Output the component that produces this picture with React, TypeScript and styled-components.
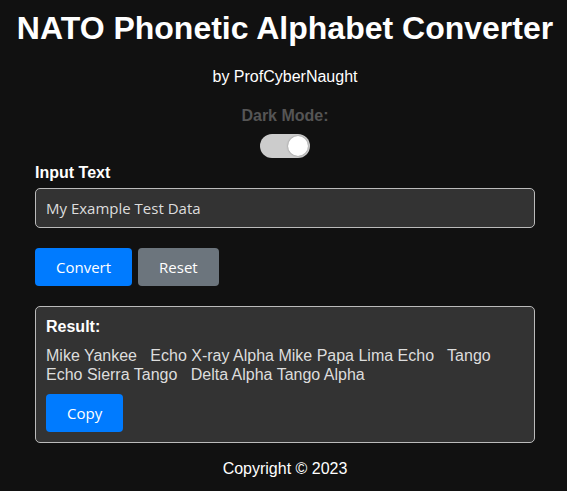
import React, { useState } from "react";
import styled, { createGlobalStyle } from "styled-components";

const Global = createGlobalStyle`
  html, body { margin: 0; padding: 0; background: #111111; }
  body { font-family: "Liberation Sans", Arial, sans-serif; color: #ffffff; }
`;

const Page = styled.div`
  display: flex;
  flex-direction: column;
  align-items: center;
  padding: 10px 0 0 3px;
`;

const Title = styled.h1`
  margin: 0;
  font-size: 32px;
  font-weight: bold;
  line-height: 37px;
  color: #ffffff;
`;

const Byline = styled.p`
  margin: 20px 0 0;
  font-size: 16px;
  line-height: 19px;
  color: #ffffff;
`;

const ModeLabel = styled.div`
  margin-top: 20px;
  font-size: 16px;
  font-weight: bold;
  line-height: 19px;
  color: #555555;
`;

const Switch = styled.button<{ $on: boolean }>`
  margin-top: 9px;
  width: 50px;
  height: 24px;
  border: none;
  padding: 0 2px;
  border-radius: 12px;
  background: #cccccc;
  display: flex;
  align-items: center;
  justify-content: ${(p) => (p.$on ? "flex-end" : "flex-start")};
  cursor: pointer;
`;

const Knob = styled.span`
  width: 20px;
  height: 20px;
  border-radius: 50%;
  background: #ffffff;
  box-shadow: 0 0 2px rgba(0, 0, 0, 0.4);
`;

const Main = styled.div`
  width: 500px;
  margin-top: 5px;
  display: flex;
  flex-direction: column;
`;

const FieldLabel = styled.label`
  font-size: 16px;
  font-weight: bold;
  line-height: 19px;
  color: #ffffff;
`;

const Input = styled.input`
  margin-top: 6px;
  box-sizing: border-box;
  width: 100%;
  height: 40px;
  padding: 0 10px;
  background: #333333;
  color: #dddddd;
  border: 1px solid #bbbbbb;
  border-radius: 5px;
  font-family: "Open Sans", "Noto Sans", sans-serif;
  font-size: 15px;
  outline: none;
`;

const Buttons = styled.div`
  margin-top: 20px;
  display: flex;
  gap: 6px;
`;

const Btn = styled.button<{ $variant: "primary" | "secondary" }>`
  height: 38px;
  padding: 0 21px;
  border: none;
  border-radius: 4px;
  background: ${(p) => (p.$variant === "primary" ? "#007bff" : "#6c757d")};
  color: #ffffff;
  font-family: "Open Sans", "Noto Sans", sans-serif;
  font-size: 15px;
  cursor: pointer;
`;

const ResultBox = styled.div`
  margin-top: 20px;
  box-sizing: border-box;
  background: #333333;
  border: 1px solid #bbbbbb;
  border-radius: 5px;
  padding: 10px;
  display: flex;
  flex-direction: column;
  align-items: flex-start;
`;

const ResultTitle = styled.div`
  font-size: 16px;
  font-weight: bold;
  line-height: 19px;
  color: #ffffff;
`;

const ResultText = styled.p`
  margin: 10px 0 0;
  font-size: 16px;
  line-height: 19px;
  color: #dddddd;
  white-space: pre-wrap;
`;

const CopyBtn = styled(Btn)`
  margin-top: 10px;
`;

const Footer = styled.footer`
  margin-top: 16px;
  font-size: 16px;
  line-height: 19px;
  color: #ffffff;
`;

export default function App() {
  const [dark, setDark] = useState(true);
  return (
    <>
      <Global />
      <Page>
        <Title>NATO Phonetic Alphabet Converter</Title>
        <Byline>by ProfCyberNaught</Byline>
        <ModeLabel>Dark Mode:</ModeLabel>
        <Switch $on={dark} onClick={() => setDark(!dark)}>
          <Knob />
        </Switch>
        <Main>
          <FieldLabel>Input Text</FieldLabel>
          <Input defaultValue="My Example Test Data" />
          <Buttons>
            <Btn $variant="primary">Convert</Btn>
            <Btn $variant="secondary">Reset</Btn>
          </Buttons>
          <ResultBox>
            <ResultTitle>Result:</ResultTitle>
            <ResultText>
              {"Mike Yankee   Echo X-ray Alpha Mike Papa Lima Echo   Tango\nEcho Sierra Tango   Delta Alpha Tango Alpha"}
            </ResultText>
            <CopyBtn $variant="primary">Copy</CopyBtn>
          </ResultBox>
        </Main>
        <Footer>Copyright © 2023</Footer>
      </Page>
    </>
  );
}
